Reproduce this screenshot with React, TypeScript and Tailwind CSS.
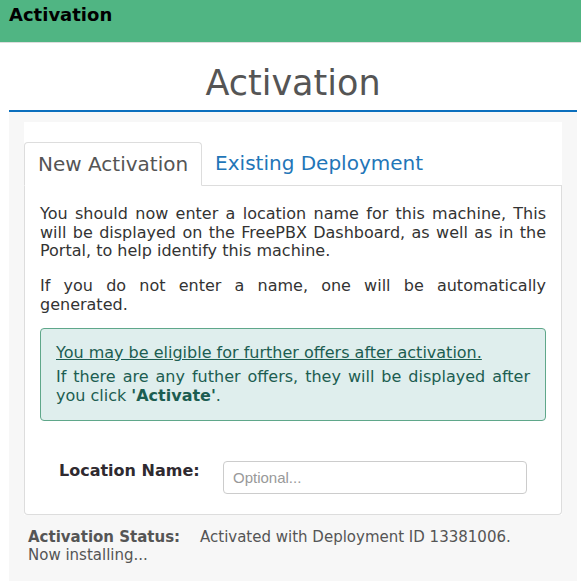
import React from "react";

export default function App() {
  return (
    <div className="w-[581px] h-[581px] overflow-hidden bg-white font-['DejaVu_Sans',sans-serif] text-[#333]">
      <div className="h-[43px] bg-[#50b583] border-b border-[#dddddd] px-[9px] text-[18px] font-bold leading-[30px] text-black">
        Activation
      </div>
      <div className="mx-[9px] w-[568px]">
        <div className="h-[69px] flex items-center justify-center text-[35px] text-[#555] border-b-2 border-[#0b6fbd] pt-[14px]">
          Activation
        </div>
        <div className="bg-[#f7f7f7] px-[15px] pt-[10px] h-[469px]">
          <div className="bg-white pt-[20px]">
            <div className="flex border-b border-[#dddddd] h-[44px]">
              <div className="h-[44px] px-[13px] border border-[#dddddd] border-b-white rounded-t-[4px] text-[20px] leading-[42px] text-[#555] bg-white">
                New Activation
              </div>
              <div className="h-[43px] px-[13px] text-[20px] leading-[42px] text-[#1f76b8]">
                Existing Deployment
              </div>
            </div>
            <div className="border-x border-b border-[#dddddd] rounded-b-[4px] px-[15px] pt-[19px] pb-[20px] text-[16px] leading-[18.5px]">
              <p className="text-justify">
                You should now enter a location name for this machine, This will be displayed on the FreePBX Dashboard, as well as in the Portal, to help identify this machine.
              </p>
              <p className="text-justify mt-[16.5px]">
                If you do not enter a name, one will be automatically generated.
              </p>
              <div className="mt-[14px] rounded-[4px] border border-[#5fa78a] bg-[#dfeeed] px-[15px] pt-[15px] pb-[15px] text-[#1c5d51]">
                <div className="underline">You may be eligible for further offers after activation.</div>
                <div className="mt-[5.5px] text-justify">
                  If there are any futher offers, they will be displayed after you click <b>'Activate'</b>.
                </div>
              </div>
              <div className="mt-[40px] flex">
                <div className="w-[183px] pl-[19px] pt-[1px] font-bold text-[#2f2a30]">Location Name:</div>
                <input
                  className="w-[304px] h-[33px] rounded-[4px] border border-[#cccccc] px-[9px] font-['Liberation_Sans',sans-serif] text-[15px] text-[#555] placeholder:text-[#999] outline-none"
                  placeholder="Optional..."
                />
              </div>
            </div>
          </div>
          <div className="pl-[4px] pt-[13px] text-[15px] leading-[18px] text-[#555]">
            <div className="flex">
              <div className="w-[172px] font-bold">Activation Status:</div>
              <div>Activated with Deployment ID 13381006.</div>
            </div>
            <div>Now installing...</div>
          </div>
        </div>
      </div>
    </div>
  );
}
